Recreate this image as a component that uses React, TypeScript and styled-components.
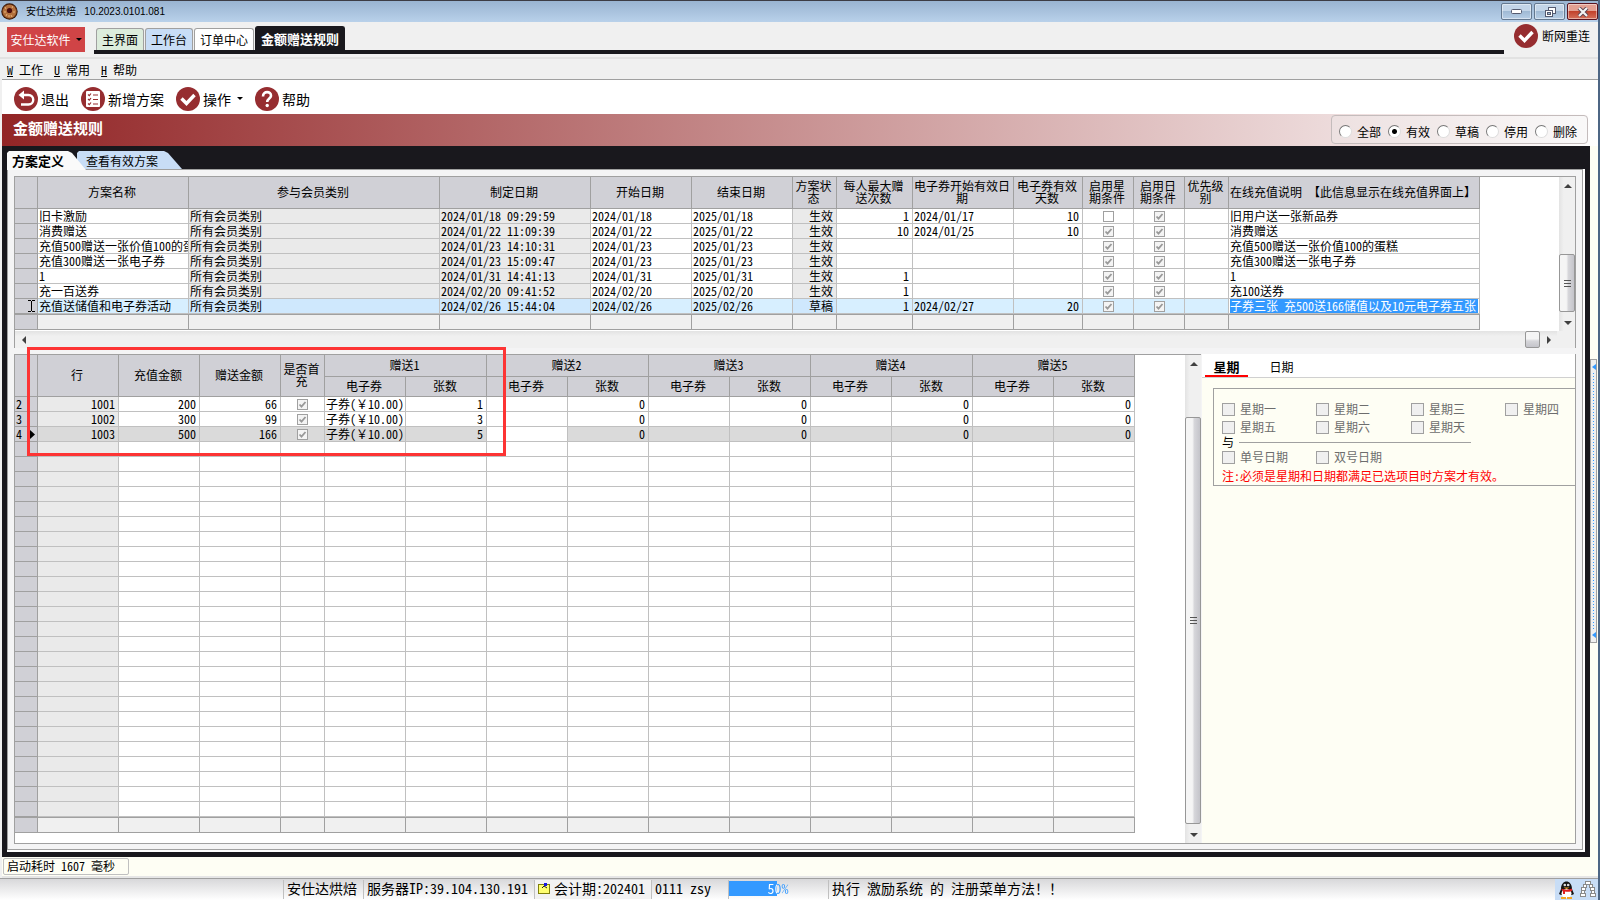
import React from "react";
import styled, { createGlobalStyle, css } from "styled-components";

const Global = createGlobalStyle`
  * { box-sizing: border-box; }
  html, body { margin: 0; padding: 0; background: #f0f0f0; }
  body, button, input, table {
    font-family: "Noto Sans Mono CJK SC", "Noto Sans CJK SC", sans-serif;
    font-size: 12px;
    line-height: 14px;
    color: #000;
  }
  button { border: 0; padding: 0; margin: 0; background: none; cursor: default; }
  input { margin: 0; padding: 0; }
`;

const LINE = "#a0a0a0";
const CELL = "#c0c0c0";
const INK = "#19181d";
const CREAM = "#fefef4";

const Window = styled.div`
  display: flex;
  flex-direction: column;
  min-height: 100vh;
  min-width: 1500px;
  background: #f0f0f0;
  border-right: 2px solid #4d6684;
`;

const TitleBar = styled.header`
  display: flex;
  align-items: center;
  height: 22px;
  padding-left: 1px;
  border-top: 1px solid #3c3c44;
  background: linear-gradient(#99b4d1, #b9d1ea);
  font-family: "Liberation Sans", "Noto Sans CJK SC", sans-serif;
  font-size: 10px;
`;
const TitleText = styled.span`
  flex: 1;
  margin-left: 8px;
  white-space: pre;
`;
const WinButtons = styled.div`
  display: flex;
  gap: 2px;
`;
const WinButton = styled.button<{ $close?: boolean }>`
  display: flex;
  align-items: center;
  justify-content: center;
  width: 31px;
  height: 17px;
  border: 1px solid ${(p) => (p.$close ? "#5a1420" : "#64788f")};
  border-radius: 2px;
  box-shadow: inset 0 0 0 1px rgba(255, 255, 255, 0.45);
  background: ${(p) =>
    p.$close
      ? "linear-gradient(#e3a092 0 45%, #c2422c 50%, #d5705a)"
      : "linear-gradient(#c3d5e8 0 45%, #a0bad4 50%, #b7cee6)"};
`;

const TopBar = styled.div`
  display: flex;
  align-items: flex-start;
  height: 37px;
  padding: 2px 8px 0 7px;
  border-bottom: 2px solid #e2e2e2;
`;
const BrandButton = styled.button`
  height: 25px;
  width: 78px;
  margin: 3px 9px 0 0;
  background: #d04446;
  color: #fff;
  display: flex;
  align-items: center;
  justify-content: center;
  gap: 2px;
`;
const TopTabs = styled.nav`
  flex: 1;
  display: flex;
  align-items: flex-end;
  height: 30px;
  padding-left: 2px;
  gap: 1px;
  border-bottom: 4px solid ${INK};
`;
const TopTab = styled.button<{ $bg: string; $on?: boolean }>`
  height: ${(p) => (p.$on ? 24 : 22)}px;
  padding: 0 5px;
  border: 1px solid ${LINE};
  border-bottom: 0;
  border-radius: 3px 3px 0 0;
  background: ${(p) => p.$bg};
  ${(p) =>
    p.$on &&
    css`
      border-color: ${INK};
      color: #fff;
      font-weight: 700;
      font-size: 13px;
    `}
`;
const Reconnect = styled.button`
  display: flex;
  align-items: center;
  gap: 4px;
  margin-left: 10px;
`;

const MenuBar = styled.nav`
  display: flex;
  align-items: center;
  gap: 11px;
  height: 21px;
  padding: 2px 0 0 5px;
  margin-left: 2px;
  border-bottom: 1px solid ${LINE};
`;
const MenuItem = styled.button`
  white-space: pre;
`;

const ToolBar = styled.div`
  display: flex;
  align-items: center;
  gap: 12px;
  height: 34px;
  margin-left: 2px;
  padding: 3px 0 0 12px;
  background: #fff;
`;
const ToolButton = styled.button`
  display: flex;
  align-items: center;
  gap: 3px;
  font-size: 14px;
  line-height: 18px;
`;
const Caret = styled.i<{ $dark?: boolean }>`
  width: 6px;
  margin-left: 3px;
  border: 3px solid transparent;
  border-top-color: #000;
  border-bottom: 0;
`;

const Band = styled.div`
  display: flex;
  justify-content: space-between;
  height: 32px;
  margin-left: 2px;
  padding: 1px 10px 2px 11px;
  background: linear-gradient(90deg, #922526, #fff);
`;
const BandTitle = styled.h1`
  margin: 4px 0 0;
  font-size: 15px;
  line-height: 18px;
  color: #fff;
`;
const Filter = styled.fieldset`
  display: flex;
  align-items: center;
  gap: 7px;
  margin: 0;
  padding: 4px 10px 0 7px;
  border: 1px solid #c4bcbc;
  border-radius: 4px;
  background: rgba(240, 240, 240, 0.3);
`;
const RadioLabel = styled.label`
  display: flex;
  align-items: center;
  gap: 5px;
`;
const Radio = styled.input`
  appearance: none;
  width: 13px;
  height: 13px;
  border-radius: 50%;
  background: #fff;
  border: 1px solid;
  border-color: #777 #ddd #ddd #777;
  &:checked {
    background: radial-gradient(circle, #000 0 2px, #fff 3px);
  }
`;

const Work = styled.div`
  flex: 1;
  display: flex;
  margin-left: 2px;
  background: ${CREAM};
`;
const Frame = styled.main`
  flex: 1;
  min-width: 0;
  display: flex;
  flex-direction: column;
  padding: 5px;
  background: ${INK};
`;
const PageTabs = styled.nav`
  display: flex;
  height: 18px;
`;
const PageTab = styled.button<{ $on?: boolean }>`
  position: relative;
  z-index: ${(p) => (p.$on ? 1 : 0)};
  height: ${(p) => (p.$on ? 19 : 18)}px;
  text-align: left;
  clip-path: polygon(0 2px, 2px 0, calc(100% - 18px) 0, calc(100% - 14px) 2px, 100% 100%, 0 100%);
  background: ${(p) => (p.$on ? "#fafafa" : "#c8ddf6")};
  ${(p) =>
    p.$on
      ? css`
          width: 79px;
          padding-left: 5px;
          font-size: 13px;
          font-weight: 700;
        `
      : css`
          width: 105px;
          margin-left: -9px;
          padding: 1px 0 0 9px;
        `}
`;
const Sheet = styled.section`
  flex: 1;
  display: flex;
  padding: 0 2px 2px 0;
  background: #fff;
`;
const SheetInner = styled.div`
  flex: 1;
  min-width: 0;
  display: flex;
  flex-direction: column;
  gap: 6px;
  padding: 6px 6px 5px;
  border: 1px solid ${LINE};
  background: #f4f4f5;
`;

const PlanGrid = styled.section`
  display: flex;
  flex-direction: column;
  border: solid ${LINE};
  border-width: 0 1px 0 1px;
  background: #fff;
`;
const GridRow = styled.div`
  display: flex;
  border-top: 1px solid ${LINE};
`;
const GridSpace = styled.div`
  flex: 1;
  min-width: 0;
  padding-bottom: 1px;
`;

const Table = styled.table<{ $w: number }>`
  width: ${(p) => p.$w}px;
  table-layout: fixed;
  border-collapse: separate;
  border-spacing: 0;
`;
const Th = styled.th`
  padding: 0 2px 2px 0;
  border: solid ${LINE};
  border-width: 0 1px 1px 0;
  background: #d0d0d6;
  font-weight: 400;
  line-height: 12px;
  white-space: nowrap;
`;
const HeadRow = styled.tr<{ $h: number }>`
  height: ${(p) => p.$h}px;
`;
type CellProps = { $gray?: boolean; $right?: boolean; $center?: boolean; $tone?: string };
const Td = styled.td<CellProps>`
  height: 15px;
  padding: 0 ${(p) => (p.$right ? 3 : 0)}px 0 ${(p) => (p.$center || p.$right ? 0 : 1)}px;
  border: solid ${CELL};
  border-width: 0 1px 1px 0;
  background: ${(p) => p.$tone || (p.$gray ? "#eaeaea" : "#fff")};
  text-align: ${(p) => (p.$right ? "right" : p.$center ? "center" : "left")};
  white-space: nowrap;
`;
const RowHead = styled.th`
  height: 15px;
  padding: 0 2px 0 1px;
  border: solid ${LINE};
  border-width: 0 1px 1px 0;
  background: #d0d0d6;
  font-weight: 400;
  text-align: left;
`;
const RowHeadInner = styled.div`
  display: flex;
  align-items: center;
  justify-content: space-between;
  height: 14px;
`;
const FootCell = styled.td<{ $head?: boolean }>`
  height: 16px;
  padding: 0;
  border: solid ${LINE};
  border-width: 1px 1px 1px 0;
  background: ${(p) => (p.$head ? "#d0d0d6" : "#f0f0f0")};
`;
const Tick = styled.input`
  appearance: none;
  display: block;
  width: 11px;
  height: 11px;
  margin: 1px auto 0;
  border: 1px solid ${LINE};
  background: #fff;
  &:checked {
    background: #f4f4f4 url("data:image/svg+xml,%3Csvg xmlns='http://www.w3.org/2000/svg' viewBox='0 0 9 9'%3E%3Cpath d='M1.5 4.5L3.5 6.7L7.5 2' fill='none' stroke='%23999' stroke-width='1.8'/%3E%3C/svg%3E");
  }
`;
const EditBox = styled.input`
  display: block;
  width: 248px;
  height: 14px;
  border: 0;
  background: #3399ff;
  color: #fff;
  line-height: 14px;
`;
const Clip = styled.div`
  overflow-x: clip;
`;

const Track = styled.div<{ $h?: boolean }>`
  display: flex;
  flex: none;
  flex-direction: ${(p) => (p.$h ? "row" : "column")};
  ${(p) => (p.$h ? "height: 17px;" : "width: 16px;")}
  background: linear-gradient(${(p) => (p.$h ? "180deg" : "90deg")}, #e3e3e3, #f0f0f0 30%);
`;
const Gap = styled.div<{ $g: number }>`
  flex: ${(p) => p.$g} 0 0;
`;
const Thumb = styled.div<{ $g: number; $h?: boolean }>`
  flex: ${(p) => (p.$h ? "0 0 15px" : `${p.$g} 0 0`)};
  display: flex;
  flex-direction: column;
  align-items: center;
  justify-content: center;
  gap: 2px;
  border: 1px solid #979797;
  border-radius: 2px;
  background: linear-gradient(${(p) => (p.$h ? "180deg" : "90deg")}, #f5f5f5 0 45%, #d6d6da 60%, #c4c4ca);
`;
const Grip = styled.i`
  width: 7px;
  height: 1px;
  background: #555;
`;
const ArrowBtn = styled.button`
  flex: none;
  display: flex;
  align-items: center;
  justify-content: center;
  width: 17px;
  height: 17px;
`;
const HLine = styled.div`
  display: flex;
  background: #f0f0f0;
`;
const Corner = styled.div`
  width: 18px;
  background: #f0f0f0;
`;

const Lower = styled.section`
  flex: 1;
  display: flex;
  border-bottom: 1px solid ${LINE};
  border-right: 1px solid ${LINE};
`;
const GiftGrid = styled.div`
  flex: 1;
  min-width: 0;
  display: flex;
  border: solid ${LINE};
  border-width: 1px 0 0 1px;
  background: #fff;
`;
const Annotated = styled.div`
  position: relative;
`;
const Marker = styled.div`
  position: absolute;
  left: 12px;
  top: -8px;
  width: 479px;
  height: 109px;
  border: 3px solid #fd3434;
  pointer-events: none;
`;

const RulePanel = styled.aside`
  flex: 0 0 373px;
  margin-left: 1px;
  background: ${CREAM};
`;
const RuleTabs = styled.nav`
  display: flex;
  gap: 6px;
  height: 24px;
  padding-left: 3px;
  background: #fff;
  border-bottom: 1px solid #d0d0d0;
`;
const RuleTab = styled.button<{ $on?: boolean }>`
  width: 43px;
  height: 23px;
  margin-right: 6px;
  padding-top: 4px;
  border-bottom: 2px solid ${(p) => (p.$on ? "#f00" : "transparent")};
  font-weight: ${(p) => (p.$on ? 700 : 400)};
  font-size: ${(p) => (p.$on ? 13 : 12)}px;
`;
const RuleBox = styled.fieldset`
  margin: 10px 0 0 11px;
  padding: 13px 0 2px 8px;
  border: 1px solid ${LINE};
  border-right: 0;
  min-width: 0;
`;
const CheckGrid = styled.div`
  display: grid;
  grid-template-columns: 94px 95px 94px 1fr;
  row-gap: 4px;
`;
const CheckLabel = styled.label`
  display: flex;
  align-items: center;
  gap: 5px;
  height: 14px;
  color: #6d6d6d;
`;
const Check = styled.input`
  appearance: none;
  width: 13px;
  height: 13px;
  border: 1px solid ${LINE};
  background: #f0f0f0;
`;
const AndLine = styled.div`
  display: flex;
  align-items: center;
  gap: 5px;
  width: 249px;
  height: 16px;
  &::after {
    content: "";
    flex: 1;
    height: 1px;
    background: ${LINE};
  }
`;
const Note = styled.p`
  margin: 5px 0 0;
  color: #f00;
`;

const Rail = styled.div`
  flex: 0 0 8px;
  display: flex;
  flex-direction: column;
  align-items: flex-start;
`;
const RailHandle = styled.button`
  display: flex;
  flex-direction: column;
  align-items: center;
  justify-content: space-between;
  width: 7px;
  height: 284px;
  margin-top: 213px;
  padding: 4px 0;
  border: 1px solid ${LINE};
  background: #f0f0f0;
`;
const RailDots = styled.i`
  flex: 1;
  width: 1px;
  margin: 3px 0;
  background: repeating-linear-gradient(#3399ff 0 1px, transparent 1px 3px);
`;

const Messages = styled.div`
  height: 21px;
  margin-left: 2px;
  padding: 1px;
  background: ${CREAM};
  border-bottom: 2px solid #e6e6e6;
`;
const Timing = styled.div`
  width: 126px;
  height: 17px;
  padding-left: 3px;
  border: 1px solid ${CELL};
  border-radius: 2px;
  white-space: pre;
`;
const StatusBar = styled.footer`
  display: flex;
  align-items: stretch;
  height: 22px;
  border-top: 1px solid ${LINE};
  background: linear-gradient(#d8d8da, #fff);
  font-size: 14px;
  line-height: 18px;
`;
const Status = styled.div<{ $w?: number; $lit?: boolean }>`
  display: flex;
  align-items: center;
  gap: 3px;
  ${(p) => (p.$w ? `flex: 0 0 ${p.$w}px;` : "flex: 1;")}
  margin: 1px 0;
  padding: 0 0 3px 3px;
  border-left: 1px solid ${CELL};
  white-space: pre;
  ${(p) => p.$lit && "background: #f2f2f2;"}
`;
const StatusSpacer = styled.div`
  flex: 0 0 283px;
`;
const Progress = styled.div`
  width: 98px;
  height: 15px;
  margin-left: -3px;
  background: linear-gradient(90deg, #3399ff 49%, transparent 49%);
`;
const ProgressText = styled.div`
  line-height: 15px;
  text-align: center;
  color: transparent;
  background: linear-gradient(90deg, #fff 49%, #3399ff 49%);
  background-clip: text;
`;
const Tray = styled.div`
  display: flex;
  align-items: center;
  gap: 5px;
  padding: 0 2px 0 3px;
  background: #c8ddf6;
`;

function Disc({ children }: { children: React.ReactNode }) {
  return (
    <svg width="24" height="24" viewBox="0 0 24 24" fill="none" stroke="#fff" aria-hidden="true">
      <circle cx="12" cy="12" r="12" fill="#962d30" stroke="none" />
      {children}
    </svg>
  );
}
const CheckMark = () => <path d="M5.5 11.5L10.5 16.5L18.5 8" strokeWidth="3.4" />;

function Arrow({ dir }: { dir: "up" | "down" | "left" | "right" }) {
  const d = { up: "M0 6L4 2L8 6Z", down: "M0 2L4 6L8 2Z", left: "M6 0L2 4L6 8Z", right: "M2 0L6 4L2 8Z" }[dir];
  return (
    <ArrowBtn aria-label={dir}>
      <svg width="8" height="8" viewBox="0 0 8 8" fill="#404040">
        <path d={d} />
      </svg>
    </ArrowBtn>
  );
}

function VScroll({ before, thumb, after }: { before: number; thumb: number; after: number }) {
  return (
    <Track>
      <Arrow dir="up" />
      <Gap $g={before} />
      <Thumb $g={thumb}>
        <Grip />
        <Grip />
        <Grip />
      </Thumb>
      <Gap $g={after} />
      <Arrow dir="down" />
    </Track>
  );
}

type Plan = {
  name: string; made: string; start: string; end: string; state: string;
  max: string; from: string; days: string; week: boolean; note: string;
};
const plan = (
  name: string, made: string, date: string, state: string,
  max: string, from: string, days: string, week: boolean, note: string
): Plan => ({ name, made: `2024/${date} ${made}`, start: `2024/${date}`, end: `2025/${date}`, state, max, from, days, week, note });

const plans: Plan[] = [
  plan("旧卡激励", "09:29:59", "01/18", "生效", "1", "2024/01/17", "10", false, "旧用户送一张新品券"),
  plan("消费赠送", "11:09:39", "01/22", "生效", "10", "2024/01/25", "10", true, "消费赠送"),
  plan("充值500赠送一张价值100的蛋糕", "14:10:31", "01/23", "生效", "", "", "", true, "充值500赠送一张价值100的蛋糕"),
  plan("充值300赠送一张电子券", "15:09:47", "01/23", "生效", "", "", "", true, "充值300赠送一张电子券"),
  plan("1", "14:41:13", "01/31", "生效", "1", "", "", true, "1"),
  plan("充一百送券", "09:41:52", "02/20", "生效", "1", "", "", true, "充100送券"),
  plan("充值送储值和电子券活动", "15:44:04", "02/26", "草稿", "1", "2024/02/27", "20", true, "子券三张 充500送166储值以及10元电子券五张"),
];
const planHeads = [
  "", "方案名称", "参与会员类别", "制定日期", "开始日期", "结束日期", "方案状|态", "每人最大赠|送次数",
  "电子券开始有效日|期", "电子券有效|天数", "启用星|期条件", "启用日|期条件", "优先级|别", "在线充值说明 【此信息显示在线充值界面上】",
];
const planCols = [23, 151, 251, 151, 101, 101, 44, 76, 101, 69, 51, 51, 44, 251];
const giftCols = [23, 81, 81, 81, 44, ...Array(10).fill(81)];
const giftRows = [
  { no: "2", id: "1001", pay: "200", give: "66", count: "1" },
  { no: "3", id: "1002", pay: "300", give: "99", count: "3" },
  { no: "4", id: "1003", pay: "500", give: "166", count: "5" },
];

const Lines = ({ text }: { text: string }) => (
  <>
    {text.split("|").map((t, i) => (
      <React.Fragment key={i}>
        {i > 0 && <br />}
        {t}
      </React.Fragment>
    ))}
  </>
);
const Cols = ({ list }: { list: number[] }) => (
  <colgroup>
    {list.map((w, i) => (
      <col key={i} width={w} />
    ))}
  </colgroup>
);
const Foot = ({ n }: { n: number }) => (
  <tfoot>
    <tr>
      {Array.from({ length: n }, (_, i) => (
        <FootCell key={i} $head={i === 0} />
      ))}
    </tr>
  </tfoot>
);

function PlanTable() {
  return (
    <Table $w={1465}>
      <Cols list={planCols} />
      <thead>
        <HeadRow $h={32}>
          {planHeads.map((h, i) => (
            <Th key={i} scope="col">
              <Lines text={h} />
            </Th>
          ))}
        </HeadRow>
      </thead>
      <tbody>
        {plans.map((p, i) => {
          const on = i === plans.length - 1;
          const a = on ? "#d7efff" : undefined;
          const b = on ? "#cfe8fd" : undefined;
          return (
            <tr key={i}>
              <RowHead scope="row">
                {on && (
                  <RowHeadInner>
                    <span />
                    <svg width="7" height="12" viewBox="0 0 7 12" stroke="#000" fill="none" aria-hidden="true">
                      <path d="M0 .5H3M4 .5H7M3.5 1V11M0 11.5H3M4 11.5H7" />
                    </svg>
                  </RowHeadInner>
                )}
              </RowHead>
              <Td $tone={a}>
                <Clip>{p.name}</Clip>
              </Td>
              <Td $gray $tone={b}>所有会员类别</Td>
              <Td $gray $tone={b}>{p.made}</Td>
              <Td $tone={a}>{p.start}</Td>
              <Td $tone={a}>{p.end}</Td>
              <Td $gray $right $tone={b}>{p.state}</Td>
              <Td $right $tone={a}>{p.max}</Td>
              <Td $tone={a}>{p.from}</Td>
              <Td $right $tone={a}>{p.days}</Td>
              <Td $center $tone={a}>
                <Tick type="checkbox" aria-label="启用星期条件" checked={p.week} readOnly />
              </Td>
              <Td $center $tone={a}>
                <Tick type="checkbox" aria-label="启用日期条件" checked readOnly />
              </Td>
              <Td $tone={a} />
              <Td>{on ? <EditBox aria-label="在线充值说明" value={p.note} readOnly /> : p.note}</Td>
            </tr>
          );
        })}
      </tbody>
      <Foot n={planCols.length} />
    </Table>
  );
}

function GiftTable() {
  return (
    <Table $w={1120}>
      <Cols list={giftCols} />
      <thead>
        <HeadRow $h={22}>
          {["", "行", "充值金额", "赠送金额", "是否首|充"].map((h, i) => (
            <Th key={i} rowSpan={2} scope="col">
              <Lines text={h} />
            </Th>
          ))}
          {[1, 2, 3, 4, 5].map((n) => (
            <Th key={n} colSpan={2} scope="colgroup">
              赠送{n}
            </Th>
          ))}
        </HeadRow>
        <HeadRow $h={20}>
          {Array.from({ length: 10 }, (_, i) => (
            <Th key={i} scope="col">
              {i % 2 ? "张数" : "电子券"}
            </Th>
          ))}
        </HeadRow>
      </thead>
      <tbody>
        {giftRows.map((r, i) => {
          const tone = i === 2 ? "#dadada" : undefined;
          return (
            <tr key={r.id}>
              <RowHead scope="row">
                <RowHeadInner>
                  {r.no}
                  {i === 2 && (
                    <svg width="5" height="9" viewBox="0 0 5 9" aria-hidden="true">
                      <path d="M0 0L5 4.5L0 9Z" />
                    </svg>
                  )}
                </RowHeadInner>
              </RowHead>
              <Td $gray $right $tone={tone}>{r.id}</Td>
              <Td $right $tone={tone}>{r.pay}</Td>
              <Td $right $tone={tone}>{r.give}</Td>
              <Td $center $tone={tone}>
                <Tick type="checkbox" aria-label="是否首充" checked readOnly />
              </Td>
              <Td $center $tone={tone}>子券(￥10.00)</Td>
              <Td $right $tone={tone}>{r.count}</Td>
              <Td />
              <Td $right $tone={tone}>0</Td>
              {[3, 4, 5].map((n) => (
                <React.Fragment key={n}>
                  <Td $tone={tone} />
                  <Td $right $tone={tone}>0</Td>
                </React.Fragment>
              ))}
            </tr>
          );
        })}
        {Array.from({ length: 25 }, (_, r) => (
          <tr key={r}>
            <RowHead />
            {giftCols.slice(1).map((_, c) => (
              <Td key={c} $gray={c === 0} />
            ))}
          </tr>
        ))}
      </tbody>
      <Foot n={giftCols.length} />
    </Table>
  );
}

const CheckItem = ({ text }: { text: string }) => (
  <CheckLabel>
    <Check type="checkbox" disabled />
    {text}
  </CheckLabel>
);

const RailArrow = () => (
  <svg width="4" height="6" viewBox="0 0 4 6" fill="#3399ff" aria-hidden="true">
    <path d="M4 0L0 3L4 6Z" />
  </svg>
);

export default function App() {
  return (
    <Window>
      <Global />
      <TitleBar>
        <svg width="17" height="17" viewBox="0 0 17 17" aria-hidden="true">
          <circle cx="8.5" cy="8.5" r="8.2" fill="#3a1a0a" />
          <circle cx="8.5" cy="8.5" r="7" fill="#b3703c" />
          <path d="M4 4L5 6M12 3L11 5M3 9H5M12 9H14M5 13L6 11M11 14L10 12M8 14V12" stroke="#e3b27c" fill="none" />
          <circle cx="8.5" cy="8.5" r="7" fill="none" stroke="#6d3414" strokeDasharray="2 2" />
          <circle cx="8.5" cy="7.5" r="2.6" fill="#4a0d0d" />
        </svg>
        <TitleText>安仕达烘焙   10.2023.0101.081</TitleText>
        <WinButtons>
          <WinButton aria-label="最小化">
            <svg width="12" height="6" viewBox="0 0 12 6">
              <rect x=".5" y=".5" width="10" height="4" rx="1" fill="#fff" stroke="#555b70" />
            </svg>
          </WinButton>
          <WinButton aria-label="还原">
            <svg width="12" height="12" viewBox="0 0 12 12" fill="#fff" stroke="#555b70">
              <rect x="4.5" y="1.5" width="7" height="6" />
              <rect x="1.5" y="4.5" width="7" height="6" />
              <rect x="3.5" y="6.5" width="3" height="2" fill="#a0bad4" />
            </svg>
          </WinButton>
          <WinButton $close aria-label="关闭">
            <svg width="12" height="10" viewBox="0 0 12 10" fill="none">
              <path d="M2 1L10 9M10 1L2 9" stroke="#5c4450" strokeWidth="4" />
              <path d="M2 1L10 9M10 1L2 9" stroke="#f4f4f4" strokeWidth="2.2" />
            </svg>
          </WinButton>
        </WinButtons>
      </TitleBar>

      <TopBar>
        <BrandButton>
          安仕达软件
          <Caret />
        </BrandButton>
        <TopTabs>
          <TopTab $bg="#dcecdc">主界面</TopTab>
          <TopTab $bg="#c8ddf6">工作台</TopTab>
          <TopTab $bg="#fff">订单中心</TopTab>
          <TopTab $bg={INK} $on>金额赠送规则</TopTab>
        </TopTabs>
        <Reconnect>
          <Disc>
            <CheckMark />
          </Disc>
          断网重连
        </Reconnect>
      </TopBar>

      <MenuBar>
        <MenuItem><u>W</u> 工作</MenuItem>
        <MenuItem><u>U</u> 常用</MenuItem>
        <MenuItem><u>H</u> 帮助</MenuItem>
      </MenuBar>

      <ToolBar>
        <ToolButton>
          <Disc>
            <path d="M8.5 8H14.5A4.7 4.7 0 0 1 14.5 17.5H7" strokeWidth="2.4" />
            <path d="M4.5 8L10 3.5V12.5Z" fill="#fff" stroke="none" />
          </Disc>
          退出
        </ToolButton>
        <ToolButton>
          <Disc>
            <rect x="5" y="4" width="14" height="16" rx="1" fill="#fff" stroke="none" />
            <path d="M7 7.5L8.3 8.7L10 6.5M7 12L8.3 13.2L10 11M7 16.5L8.3 17.7L10 15.5M12 8H17M12 12.5H17M12 17H17" stroke="#962d30" strokeWidth="1.2" />
          </Disc>
          新增方案
        </ToolButton>
        <ToolButton>
          <Disc>
            <CheckMark />
          </Disc>
          操作
          <Caret />
        </ToolButton>
        <ToolButton>
          <Disc>
            <path d="M8 9.5C8 3.5 16.3 4 16 8.8C15.8 11.5 12.2 11.5 12.2 15" strokeWidth="2.6" />
            <circle cx="12.2" cy="18.5" r="1.7" fill="#fff" stroke="none" />
          </Disc>
          帮助
        </ToolButton>
      </ToolBar>

      <Band>
        <BandTitle>金额赠送规则</BandTitle>
        <Filter>
          {["全部", "有效", "草稿", "停用", "删除"].map((t, i) => (
            <RadioLabel key={t}>
              <Radio type="radio" name="state" defaultChecked={i === 1} />
              {t}
            </RadioLabel>
          ))}
        </Filter>
      </Band>

      <Work>
        <Frame>
          <PageTabs>
            <PageTab $on>方案定义</PageTab>
            <PageTab>查看有效方案</PageTab>
          </PageTabs>
          <Sheet>
            <SheetInner>
              <PlanGrid>
                <GridRow>
                  <GridSpace>
                    <PlanTable />
                  </GridSpace>
                  <VScroll before={62} thumb={58} after={2} />
                </GridRow>
                <HLine>
                  <Gap $g={1}>
                    <Track $h>
                      <Arrow dir="left" />
                      <Gap $g={1} />
                      <Thumb $g={0} $h />
                      <Arrow dir="right" />
                    </Track>
                  </Gap>
                  <Corner />
                </HLine>
              </PlanGrid>
              <Lower>
                <GiftGrid>
                  <Gap $g={1}>
                    <Annotated>
                      <GiftTable />
                      <Marker />
                    </Annotated>
                  </Gap>
                  <VScroll before={45} thumb={406} after={2} />
                </GiftGrid>
                <RulePanel>
                  <RuleTabs>
                    <RuleTab $on>星期</RuleTab>
                    <RuleTab>日期</RuleTab>
                  </RuleTabs>
                  <RuleBox>
                    <CheckGrid>
                      {["一", "二", "三", "四", "五", "六", "天"].map((d) => (
                        <CheckItem key={d} text={`星期${d}`} />
                      ))}
                    </CheckGrid>
                    <AndLine>与</AndLine>
                    <CheckGrid>
                      <CheckItem text="单号日期" />
                      <CheckItem text="双号日期" />
                    </CheckGrid>
                    <Note>注:必须是星期和日期都满足已选项目时方案才有效。</Note>
                  </RuleBox>
                </RulePanel>
              </Lower>
            </SheetInner>
          </Sheet>
        </Frame>
        <Rail>
          <RailHandle aria-label="展开">
            <RailArrow />
            <RailDots />
            <RailArrow />
          </RailHandle>
        </Rail>
      </Work>

      <Messages>
        <Timing>启动耗时 1607 毫秒</Timing>
      </Messages>
      <StatusBar>
        <StatusSpacer />
        <Status $w={80}>安仕达烘焙</Status>
        <Status $w={171}>服务器IP:39.104.130.191</Status>
        <Status $w={117} $lit>
          <svg width="13" height="13" viewBox="0 0 13 13" aria-hidden="true">
            <rect x=".5" y="2.5" width="11" height="9" fill="#ffff70" stroke="#80800c" />
            <path d="M4 6L6 4L9 6" stroke="#222" fill="none" />
            <rect x="6" y="1" width="3" height="3" fill="#1818e0" />
          </svg>
          会计期:202401
        </Status>
        <Status $w={77}>0111 zsy</Status>
        <Status $w={100}>
          <Progress role="progressbar" aria-label="进度" aria-valuenow={50}>
            <ProgressText>50%</ProgressText>
          </Progress>
        </Status>
        <Status>执行 激励系统 的 注册菜单方法！！</Status>
        <Tray>
          <svg width="17" height="18" viewBox="0 0 17 18" aria-hidden="true">
            <path d="M3 8C3 -2 14 -2 14 8L16 13L14 14H3L1 13Z" fill="#141414" />
            <ellipse cx="8.5" cy="12.5" rx="5" ry="4.5" fill="#fff" />
            <circle cx="6.8" cy="4" r="1.3" fill="#ddd" />
            <circle cx="10.2" cy="4" r="1.3" fill="#ddd" />
            <path d="M5.500 6.500H11.500L8.500 8Z" fill="#f5a623" />
            <path d="M3 7.500C6 9 11 9 14 7.500V10C11 11 8 11 7 10.500V13H5V10.500Z" fill="#e02020" />
            <path d="M3 16H8V18H3ZM9 16H14V18H9Z" fill="#f5a623" />
          </svg>
          <svg width="16" height="17" viewBox="0 0 16 17" fill="#fff" stroke="#8a8a8a" aria-hidden="true">
            <rect x="5.500" y=".5" width="5" height="3" />
            <rect x="3.500" y="3.500" width="3" height="3" />
            <rect x="9.500" y="3.500" width="3" height="3" />
            <rect x="1.500" y="6.500" width="4" height="3" />
            <rect x="10.500" y="6.500" width="4" height="3" />
            <rect x="1.500" y="9.500" width="3" height="3" />
            <rect x="11.500" y="9.500" width="3" height="3" />
            <rect x=".5" y="12.500" width="5" height="3" />
            <rect x="10.500" y="12.500" width="5" height="3" />
          </svg>
        </Tray>
      </StatusBar>
    </Window>
  );
}
